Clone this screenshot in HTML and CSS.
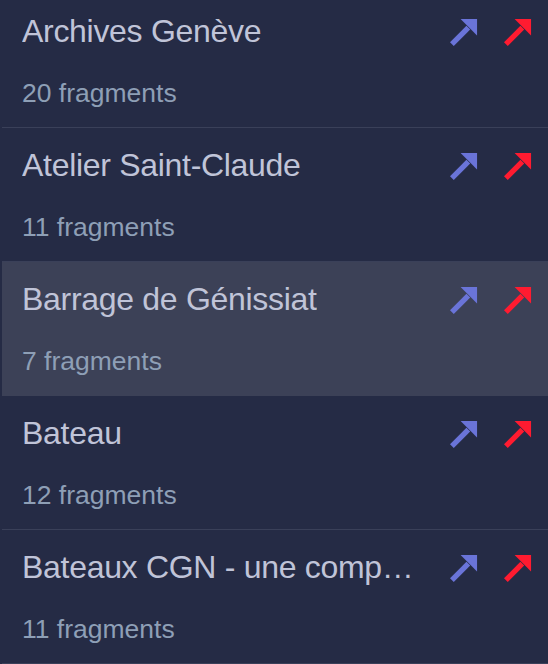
FILE: index.html
```html
<!DOCTYPE html>
<html>
<head>
<meta charset="utf-8">
<link rel="stylesheet" href="styles.css">
</head>
<body>
<ul class="list">
  <li class="item">
    <div class="head"><span class="title">Archives Genève</span>
      <span class="icons">
        <svg class="arrow blue" viewBox="0 0 30 30"><line x1="3" y1="27" x2="20" y2="10"/><polygon points="12,1 29,1 29,18"/></svg>
        <svg class="arrow red" viewBox="0 0 30 30"><line x1="3" y1="27" x2="20" y2="10"/><polygon points="12,1 29,1 29,18"/></svg>
      </span></div>
    <div class="sub">20 fragments</div>
  </li>
  <li class="item">
    <div class="head"><span class="title">Atelier Saint-Claude</span>
      <span class="icons">
        <svg class="arrow blue" viewBox="0 0 30 30"><line x1="3" y1="27" x2="20" y2="10"/><polygon points="12,1 29,1 29,18"/></svg>
        <svg class="arrow red" viewBox="0 0 30 30"><line x1="3" y1="27" x2="20" y2="10"/><polygon points="12,1 29,1 29,18"/></svg>
      </span></div>
    <div class="sub">11 fragments</div>
  </li>
  <li class="item active">
    <div class="head"><span class="title">Barrage de Génissiat</span>
      <span class="icons">
        <svg class="arrow blue" viewBox="0 0 30 30"><line x1="3" y1="27" x2="20" y2="10"/><polygon points="12,1 29,1 29,18"/></svg>
        <svg class="arrow red" viewBox="0 0 30 30"><line x1="3" y1="27" x2="20" y2="10"/><polygon points="12,1 29,1 29,18"/></svg>
      </span></div>
    <div class="sub">7 fragments</div>
  </li>
  <li class="item">
    <div class="head"><span class="title">Bateau</span>
      <span class="icons">
        <svg class="arrow blue" viewBox="0 0 30 30"><line x1="3" y1="27" x2="20" y2="10"/><polygon points="12,1 29,1 29,18"/></svg>
        <svg class="arrow red" viewBox="0 0 30 30"><line x1="3" y1="27" x2="20" y2="10"/><polygon points="12,1 29,1 29,18"/></svg>
      </span></div>
    <div class="sub">12 fragments</div>
  </li>
  <li class="item">
    <div class="head"><span class="title">Bateaux CGN - une compagnie lémanique</span>
      <span class="icons">
        <svg class="arrow blue" viewBox="0 0 30 30"><line x1="3" y1="27" x2="20" y2="10"/><polygon points="12,1 29,1 29,18"/></svg>
        <svg class="arrow red" viewBox="0 0 30 30"><line x1="3" y1="27" x2="20" y2="10"/><polygon points="12,1 29,1 29,18"/></svg>
      </span></div>
    <div class="sub">11 fragments</div>
  </li>
</ul>
</body>
</html>
```
FILE: styles.css
```css
html, body {
  margin: 0;
  padding: 0;
  background: #252b45;
  overflow: hidden;
  height: 664px;
}
body {
  padding-left: 2px;
  font-family: "Liberation Sans", Arial, sans-serif;
}
.list {
  list-style: none;
  margin: -6px 0 0 0;
  padding: 0;
}
.item {
  height: 133px;
  box-sizing: content-box;
  border-bottom: 1px solid #3a4059;
  padding: 0 16px 0 20px;
  display: flex;
  flex-direction: column;
}
.item.active {
  background: #3c4157;
  border-bottom-color: #3c4157;
}
.head {
  display: flex;
  align-items: center;
  margin-top: 16px;
  height: 42px;
}
.title {
  flex: 0 1 auto;
  max-width: 395px;
  white-space: nowrap;
  overflow: hidden;
  text-overflow: ellipsis;
  font-size: 32px;
  line-height: 42px;
  letter-spacing: -0.3px;
  color: #c0c4d8;
}
.icons {
  margin-left: auto;
  display: flex;
  gap: 25px;
  align-items: center;
  padding-top: 3px;
}
.arrow {
  width: 29px;
  height: 29px;
  display: block;
}
.arrow line {
  stroke-width: 5.5;
}
.blue line { stroke: #6a74d8; }
.blue polygon { fill: #6a74d8; }
.red line { stroke: #ff1b30; }
.red polygon { fill: #ff1b30; }
.sub {
  margin-top: 23px;
  font-size: 26.5px;
  line-height: 36px;
  color: #8e9fb6;
}
```
